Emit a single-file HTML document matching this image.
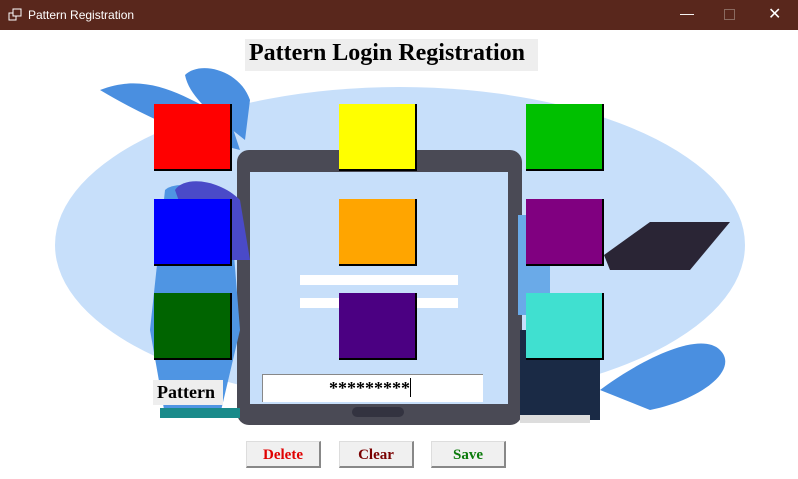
<!DOCTYPE html>
<html><head><style>
body{margin:0;width:798px;height:479px;overflow:hidden;background:#fff;position:relative;font-family:"Liberation Serif",serif}
.a{position:absolute}
.tb{left:0;top:0;width:798px;height:30px;background:#59271c;color:#fff;font:12px "Liberation Sans",sans-serif}
.sq{position:absolute;width:76px;height:65px;border-right:2px solid #000;border-bottom:2px solid #000}
.btn{position:absolute;top:441px;width:72px;height:24px;background:#f0f0f0;border:1px solid #ddd;border-right:2px solid #888;border-bottom:2px solid #888;font:bold 15px "Liberation Serif",serif;text-align:center;line-height:27px}
</style></head><body>
<div class="a tb"><svg class="a" style="left:8px;top:8px" width="14" height="14"><rect x="1" y="5" width="7" height="7" fill="none" stroke="#fff"/><rect x="5" y="1" width="8" height="7" fill="#59271c" stroke="#fff"/></svg><span class="a" style="left:28px;top:8px">Pattern Registration</span>
<span class="a" style="left:680px;top:5px;font-size:14px">&#8212;</span>
<div class="a" style="left:724px;top:9px;width:9px;height:9px;border:1px solid #8a6a60"></div>
<span class="a" style="left:768px;top:4px;font-size:16px">&#10005;</span></div>
<svg class="a" style="left:0;top:30px" width="798" height="449">
<ellipse cx="400" cy="215" rx="345" ry="158" fill="#c7dffa"/>
<path d="M100 60 C150 40 190 70 230 90 L240 120 C200 110 150 90 100 60Z" fill="#4a8fe0"/>
<path d="M185 45 C200 30 240 40 250 70 L245 110 C220 90 190 70 185 45Z" fill="#4a8fe0"/>
<path d="M600 360 C640 330 700 300 720 320 C740 340 700 370 650 380Z" fill="#4a8fe0"/>
<rect x="237" y="120" width="285" height="275" rx="12" fill="#4a4a55"/>
<rect x="250" y="142" width="258" height="232" fill="#c7dffa"/>
<rect x="300" y="245" width="158" height="10" fill="#fff"/>
<rect x="300" y="268" width="158" height="10" fill="#fff"/>
<rect x="352" y="377" width="52" height="10" rx="5" fill="#333340"/>
<path d="M165 160 C175 150 215 155 230 175 L240 300 L220 385 L165 385 L150 300Z" fill="#4f95e3"/>
<path d="M175 160 C185 145 220 150 240 170 L250 230 L200 230Z" fill="#4a4ac8"/>
<rect x="518" y="185" width="32" height="100" fill="#6aaae8"/>
<rect x="520" y="300" width="80" height="90" fill="#1a2a45"/>
<path d="M604 225 L650 192 L730 192 L690 240 L610 240Z" fill="#2a2535"/>
<rect x="520" y="385" width="70" height="8" fill="#ddd"/>
<rect x="160" y="378" width="80" height="10" fill="#1a8a8a"/>
</svg>
<div class="a" style="left:245px;top:39px;width:293px;height:32px;background:#eee;font-weight:bold;font-size:24px;line-height:28px;padding-left:4px;box-sizing:border-box">Pattern Login Registration</div>
<div class="sq" style="left:154px;top:104px;background:#f00"></div>
<div class="sq" style="left:339px;top:104px;background:#ff0"></div>
<div class="sq" style="left:526px;top:104px;background:#00c000"></div>
<div class="sq" style="left:154px;top:199px;background:#00f"></div>
<div class="sq" style="left:339px;top:199px;background:#ffa500"></div>
<div class="sq" style="left:526px;top:199px;background:#800080"></div>
<div class="sq" style="left:154px;top:293px;background:#006400"></div>
<div class="sq" style="left:339px;top:293px;background:#4b0082"></div>
<div class="sq" style="left:526px;top:293px;background:#40e0d0"></div>
<div class="a" style="left:153px;top:380px;width:70px;height:25px;background:#eee;font-weight:bold;font-size:18px;line-height:24px;padding-left:4px;box-sizing:border-box">Pattern</div>
<div class="a" style="left:262px;top:374px;width:221px;height:28px;background:#fff;border-top:1px solid #888;border-left:1px solid #888;box-sizing:border-box;font-weight:bold;font-size:18px;line-height:26px;padding-left:66px">*********<span style="display:inline-block;width:1px;height:19px;background:#000;vertical-align:-3px"></span></div>
<div class="btn" style="left:246px;color:#e00000">Delete</div>
<div class="btn" style="left:339px;color:#7a0000">Clear</div>
<div class="btn" style="left:431px;color:#0a7a0a">Save</div>
</body></html>
